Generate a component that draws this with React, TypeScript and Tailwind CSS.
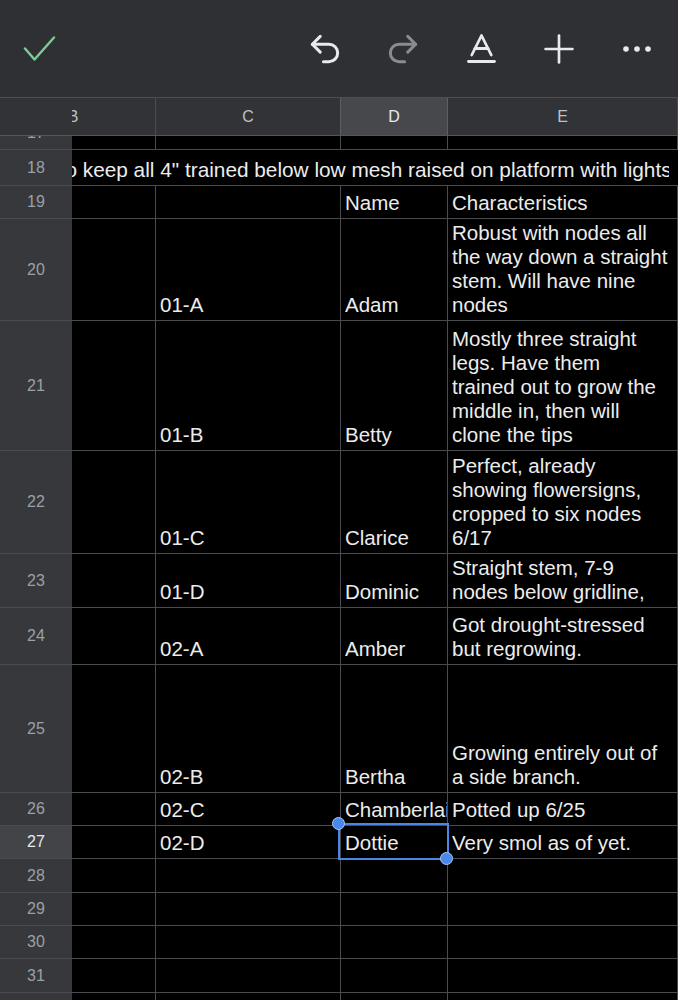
import React from 'react';
import { Undo2, Redo2, Baseline, Plus } from 'lucide-react';

type Row = {
  n: number;
  h: number;
  c?: string;
  d?: string;
  e?: string[];
  overflow?: string;
  sel?: boolean;
};

const rows: Row[] = [
  { n: 17, h: 33 },
  { n: 18, h: 36, overflow: 'To keep all 4" trained below low mesh raised on platform with lights' },
  { n: 19, h: 33, d: 'Name', e: ['Characteristics'] },
  { n: 20, h: 102, c: '01-A', d: 'Adam', e: ['Robust with nodes all', 'the way down a straight', 'stem. Will have nine', 'nodes'] },
  { n: 21, h: 130, c: '01-B', d: 'Betty', e: ['Mostly three straight', 'legs. Have them', 'trained out to grow the', 'middle in, then will', 'clone the tips'] },
  { n: 22, h: 103, c: '01-C', d: 'Clarice', e: ['Perfect, already', 'showing flowersigns,', 'cropped to six nodes', '6/17'] },
  { n: 23, h: 54, c: '01-D', d: 'Dominic', e: ['Straight stem, 7-9', 'nodes below gridline,'] },
  { n: 24, h: 57, c: '02-A', d: 'Amber', e: ['Got drought-stressed', 'but regrowing.'] },
  { n: 25, h: 128, c: '02-B', d: 'Bertha', e: ['Growing entirely out of', 'a side branch.'] },
  { n: 26, h: 33, c: '02-C', d: 'Chamberlain', e: ['Potted up 6/25'] },
  { n: 27, h: 33, c: '02-D', d: 'Dottie', e: ['Very smol as of yet.'], sel: true },
  { n: 28, h: 34 },
  { n: 29, h: 33 },
  { n: 30, h: 33 },
  { n: 31, h: 34 },
  { n: 32, h: 33 },
];

function Toolbar() {
  return (
    <div className="h-[97px] shrink-0 bg-[#2f3033] flex items-center">
      <div className="w-[78px] flex justify-center">
        <svg width="33" height="26" viewBox="0 0 33 26" fill="none">
          <path d="M2 12.5 L11.5 23.5 L31 1.5" stroke="#7fcb98" strokeWidth="2.4" strokeLinecap="round" strokeLinejoin="round" />
        </svg>
      </div>
      <div className="flex-1" />
      <div className="flex items-center pr-[2px]">
        <div className="w-[78px] flex justify-center">
          <Undo2 size={38} strokeWidth={1.9} color="#e8eaed" />
        </div>
        <div className="w-[78px] flex justify-center">
          <Redo2 size={38} strokeWidth={1.9} color="#8b8c8f" />
        </div>
        <div className="w-[78px] flex justify-center">
          <Baseline size={39} strokeWidth={1.7} color="#e8eaed" />
        </div>
        <div className="w-[78px] flex justify-center">
          <Plus size={46} strokeWidth={1.4} color="#e8eaed" />
        </div>
        <div className="w-[78px] flex justify-center">
          <svg width="28" height="8" viewBox="0 0 28 8">
            <circle cx="3" cy="4" r="2.8" fill="#e8eaed" />
            <circle cx="14" cy="4" r="2.8" fill="#e8eaed" />
            <circle cx="25" cy="4" r="2.8" fill="#e8eaed" />
          </svg>
        </div>
      </div>
    </div>
  );
}

function Header() {
  return (
    <div className="h-[39px] shrink-0 flex border-t border-b border-t-[#4e4f52] border-b-[#55565a] bg-[#323336] text-[16px] text-[#bdc1c6]">
      <div className="w-[72px] shrink-0 relative z-10 bg-[#323336]" />
      <div className="flex -ml-[81px] h-full">
        <div className="w-[165px] shrink-0 border-r border-[#4b4c4f] flex items-center justify-center">B</div>
        <div className="w-[185px] shrink-0 border-r border-[#4b4c4f] flex items-center justify-center">C</div>
        <div className="shrink-0 border-r border-l border-[#5d5f62] -ml-px w-[108px] bg-[#46484b] text-[#e8eaed] flex items-center justify-center">D</div>
        <div className="w-[230px] shrink-0 border-r border-[#4b4c4f] flex items-center justify-center">E</div>
      </div>
    </div>
  );
}

function Lines({ lines }: { lines?: string[] }) {
  if (!lines) return null;
  return (
    <div className="whitespace-nowrap overflow-hidden w-full">
      {lines.map((l, i) => (
        <div key={i}>{l}</div>
      ))}
    </div>
  );
}

function GridRow({ r }: { r: Row }) {
  const numCls = r.sel
    ? 'bg-[#424447] text-[#e8eaed]'
    : 'bg-[#37383b] text-[#9aa0a6]';
  const cell =
    'shrink-0 h-full border-r border-[#4b4c4f] flex items-end pl-1 pb-[3px]';
  return (
    <div
      className="flex border-b border-[#4b4c4f] shrink-0"
      style={{ height: r.h }}
    >
      <div className={`w-[72px] shrink-0 relative z-10 flex items-center justify-center text-[16px] ${numCls}`}>
        {r.n}
      </div>
      <div className="flex -ml-[81px] h-full text-[20.5px] leading-[24px] text-[#ececec]">
        {r.overflow ? (
          <div className="w-[678px] h-full flex items-end pl-[64px] pb-[3px] whitespace-nowrap overflow-hidden text-[20.8px]">
            {r.overflow}
          </div>
        ) : (
          <>
            <div className={`w-[165px] ${cell}`} />
            <div className={`w-[185px] ${cell}`}>
              <Lines lines={r.c ? [r.c] : undefined} />
            </div>
            <div className={`w-[107px] relative ${cell}`}>
              <Lines lines={r.d ? [r.d] : undefined} />
              {r.sel && (
                <>
                  <div className="absolute z-20 left-[-3px] top-[-3px] w-[111px] h-[37px] border-2 border-[#4a86e8]" />
                  <div className="absolute z-20 left-[-9px] top-[-9px] w-[13px] h-[13px] rounded-full bg-[#4a89ec] border border-[#a9c7f5]" />
                  <div className="absolute z-20 left-[99px] top-[26px] w-[13px] h-[13px] rounded-full bg-[#4a89ec] border border-[#a9c7f5]" />
                </>
              )}
            </div>
            <div className={`w-[230px] ${cell}`}>
              <Lines lines={r.e} />
            </div>
          </>
        )}
      </div>
    </div>
  );
}

export default function App() {
  return (
    <div className="w-[678px] h-[1000px] overflow-hidden bg-black flex flex-col font-['Liberation_Sans',Arial,sans-serif]">
      <Toolbar />
      <Header />
      <div className="flex-1 overflow-hidden">
        <div className="-mt-[19px] flex flex-col">
          {rows.map((r) => (
            <GridRow key={r.n} r={r} />
          ))}
        </div>
      </div>
    </div>
  );
}
